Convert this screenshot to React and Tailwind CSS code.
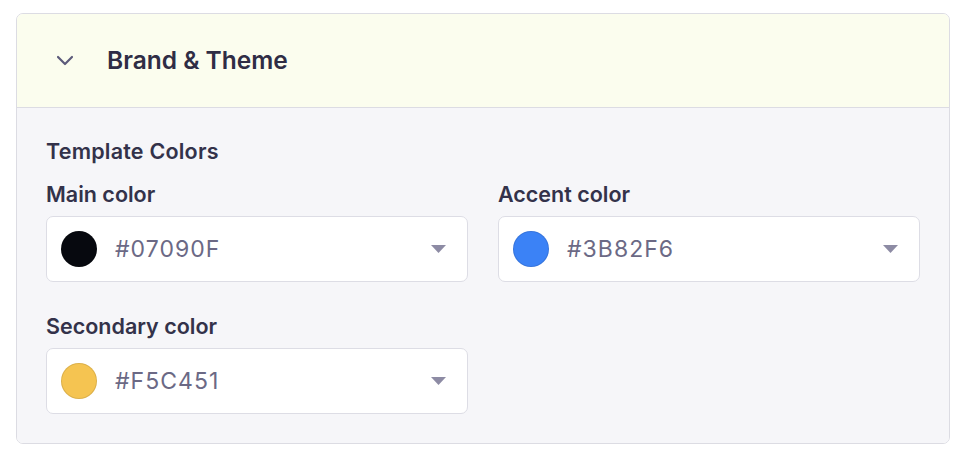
import React from "react";

const colors = [
  { label: "Main color", value: "#07090F" },
  { label: "Accent color", value: "#3B82F6" },
  { label: "Secondary color", value: "#F5C451" },
];

function Caret() {
  return (
    <svg width="15" height="8" viewBox="0 0 15 8" className="shrink-0">
      <path d="M0 0H15L7.5 8Z" fill="#8d8ba4" />
    </svg>
  );
}

function ColorField({ label, value }) {
  return (
    <div className="flex flex-col gap-2">
      <label className="text-[21.5px] leading-[28px] font-semibold text-[#33324a]">
        {label}
      </label>
      <div className="h-[66px] flex items-center bg-white border border-[#dddde5] rounded-[7px] pl-[14px] pr-[21px]">
        <span
          className="w-9 h-9 rounded-full border border-black/10 shrink-0"
          style={{ backgroundColor: value }}
        />
        <span className="ml-[18px] flex-1 text-[23px] tracking-[0.045em] text-[#6b6985]">
          {value}
        </span>
        <Caret />
      </div>
    </div>
  );
}

export default function App() {
  return (
    <div
      className="w-[966px] h-[458px] bg-white pt-[13px] px-4"
      style={{ fontFamily: "Inter, 'Noto Sans', sans-serif" }}
    >
      <div className="border border-[#dcdce3] rounded-[7px] overflow-hidden">
        <div className="h-[94px] bg-[#fbfdee] flex items-center border-b border-[#dcdce3]">
          <svg
            width="18"
            height="11"
            viewBox="0 0 18 11"
            className="ml-[39px]"
            fill="none"
          >
            <path
              d="M2 2L9 9L16 2"
              stroke="#5c5b7a"
              strokeWidth="2.2"
              strokeLinecap="round"
              strokeLinejoin="round"
            />
          </svg>
          <h2 className="ml-[33px] text-[24.5px] font-semibold text-[#2f2d45]">
            Brand &amp; Theme
          </h2>
        </div>
        <div className="bg-[#f6f6f9] px-[29px] pt-[29px] pb-[29px]">
          <h3 className="text-[21.5px] tracking-[0.01em] leading-[28px] font-semibold text-[#33324a]">
            Template Colors
          </h3>
          <div className="mt-[15px] grid grid-cols-2 gap-x-[30px] gap-y-[30px]">
            {colors.map((c) => (
              <ColorField key={c.label} label={c.label} value={c.value} />
            ))}
          </div>
        </div>
      </div>
    </div>
  );
}
